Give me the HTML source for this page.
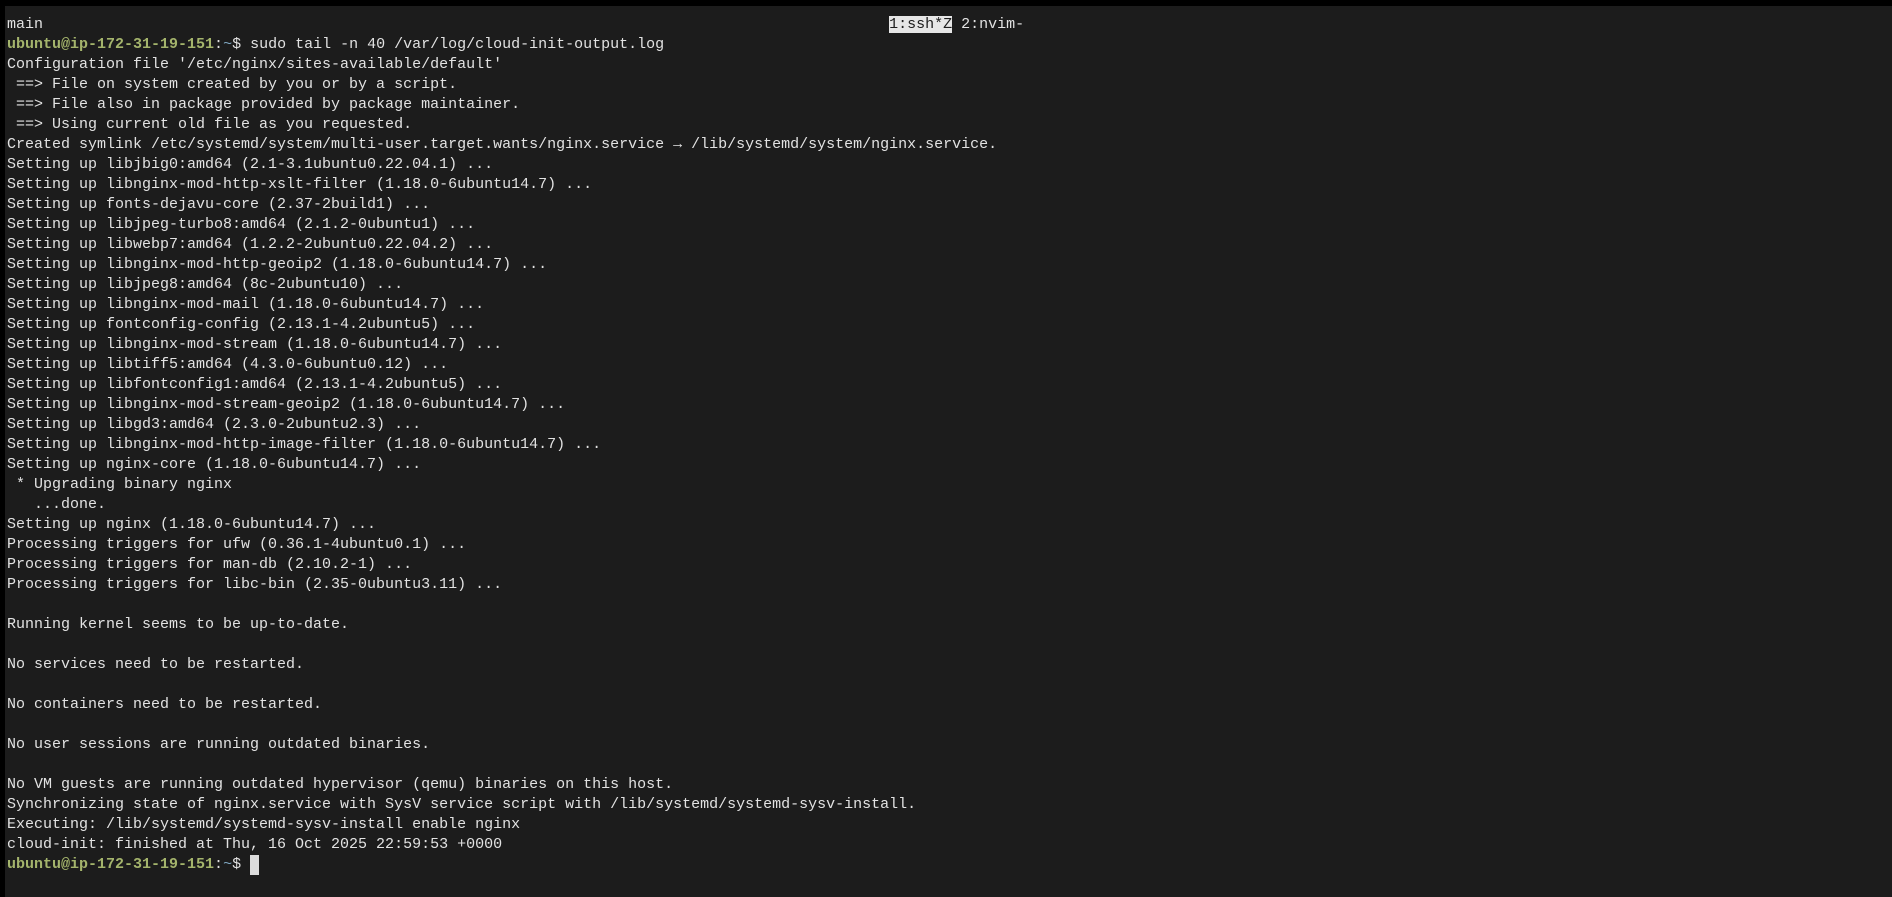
<!DOCTYPE html>
<html><head><meta charset="utf-8"><style>
html,body{margin:0;padding:0;background:#000;}
body{width:1892px;height:897px;overflow:hidden;position:relative;}
#t{position:absolute;left:5px;top:6px;right:0;bottom:0;background:#1c1c1c;}
pre{position:absolute;left:2px;top:9px;margin:0;font-family:"Liberation Mono",monospace;font-size:15px;line-height:20px;color:#e2e2e2;white-space:pre;}
.g{color:#a4b46c;font-weight:bold}.b{color:#7fa7c2}
.h{background:#e6e6e6;color:#1c1c1c}
.c{display:inline-block;width:9px;height:20px;background:#dcdcdc;vertical-align:top;}
</style></head><body><div id="t"><pre>main                                                                                              <span class="h">1:ssh*Z</span> 2:nvim-
<span class="g">ubuntu@ip-172-31-19-151</span>:<span class="b">~</span>$ sudo tail -n 40 /var/log/cloud-init-output.log
Configuration file '/etc/nginx/sites-available/default'
 ==&gt; File on system created by you or by a script.
 ==&gt; File also in package provided by package maintainer.
 ==&gt; Using current old file as you requested.
Created symlink /etc/systemd/system/multi-user.target.wants/nginx.service → /lib/systemd/system/nginx.service.
Setting up libjbig0:amd64 (2.1-3.1ubuntu0.22.04.1) ...
Setting up libnginx-mod-http-xslt-filter (1.18.0-6ubuntu14.7) ...
Setting up fonts-dejavu-core (2.37-2build1) ...
Setting up libjpeg-turbo8:amd64 (2.1.2-0ubuntu1) ...
Setting up libwebp7:amd64 (1.2.2-2ubuntu0.22.04.2) ...
Setting up libnginx-mod-http-geoip2 (1.18.0-6ubuntu14.7) ...
Setting up libjpeg8:amd64 (8c-2ubuntu10) ...
Setting up libnginx-mod-mail (1.18.0-6ubuntu14.7) ...
Setting up fontconfig-config (2.13.1-4.2ubuntu5) ...
Setting up libnginx-mod-stream (1.18.0-6ubuntu14.7) ...
Setting up libtiff5:amd64 (4.3.0-6ubuntu0.12) ...
Setting up libfontconfig1:amd64 (2.13.1-4.2ubuntu5) ...
Setting up libnginx-mod-stream-geoip2 (1.18.0-6ubuntu14.7) ...
Setting up libgd3:amd64 (2.3.0-2ubuntu2.3) ...
Setting up libnginx-mod-http-image-filter (1.18.0-6ubuntu14.7) ...
Setting up nginx-core (1.18.0-6ubuntu14.7) ...
 * Upgrading binary nginx
   ...done.
Setting up nginx (1.18.0-6ubuntu14.7) ...
Processing triggers for ufw (0.36.1-4ubuntu0.1) ...
Processing triggers for man-db (2.10.2-1) ...
Processing triggers for libc-bin (2.35-0ubuntu3.11) ...

Running kernel seems to be up-to-date.

No services need to be restarted.

No containers need to be restarted.

No user sessions are running outdated binaries.

No VM guests are running outdated hypervisor (qemu) binaries on this host.
Synchronizing state of nginx.service with SysV service script with /lib/systemd/systemd-sysv-install.
Executing: /lib/systemd/systemd-sysv-install enable nginx
cloud-init: finished at Thu, 16 Oct 2025 22:59:53 +0000
<span class="g">ubuntu@ip-172-31-19-151</span>:<span class="b">~</span>$ <span class="c"></span></pre></div></body></html>
